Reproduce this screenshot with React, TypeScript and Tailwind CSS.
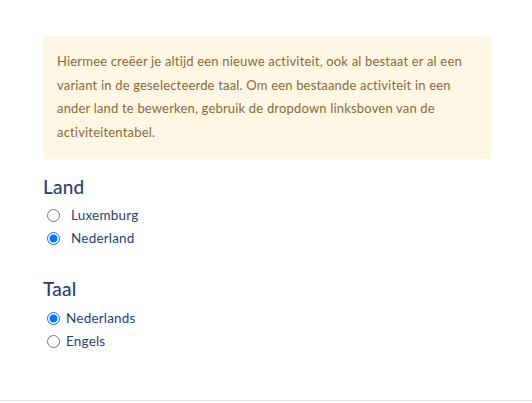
import React from "react";

const font = { fontFamily: "Lato, 'Open Sans', sans-serif" };

function Radio({ name, label, checked, wide }: { name: string; label: string; checked?: boolean; wide?: boolean }) {
    return (
        <label className="flex items-center h-[23px] text-[13.5px] tracking-[0.2px] text-[#2c3e70]">
            <input type="radio" name={name} defaultChecked={checked} className={`m-0 ml-1 w-[13px] h-[13px] ${wide ? "mr-[11px]" : "mr-[6px]"}`} />
            <span>{label}</span>
        </label>
    );
}

export default function App() {
    return (
        <div className="w-[532px] h-[401px] bg-white border-b border-[#e2e2e2] box-border" style={font}>
            <div className="pl-[43px] pt-[36px] w-[491px]">
                <div className="bg-[#fdf7e3] rounded-[3px] px-[14px] pt-[14px] pb-[15px] text-[13px] leading-[23.5px] tracking-[0.18px] text-[#8a6a3c]">
                    Hiermee creëer je altijd een nieuwe activiteit, ook al bestaat er al een variant in de geselecteerde taal. Om een bestaande activiteit in een ander land te bewerken, gebruik de dropdown linksboven van de activiteitentabel.
                </div>
                <h2 className="mt-[16px] text-[19px] leading-[24px] tracking-[0.2px] text-[#2c3e70] font-medium">Land</h2>
                <div className="mt-[5px]">
                    <Radio name="land" label="Luxemburg" wide />
                    <Radio name="land" label="Nederland" checked wide />
                </div>
                <h2 className="mt-[27px] text-[19px] leading-[24px] tracking-[0.2px] text-[#2c3e70] font-medium">Taal</h2>
                <div className="mt-[6px]">
                    <Radio name="taal" label="Nederlands" checked />
                    <Radio name="taal" label="Engels" />
                </div>
            </div>
        </div>
    );
}
